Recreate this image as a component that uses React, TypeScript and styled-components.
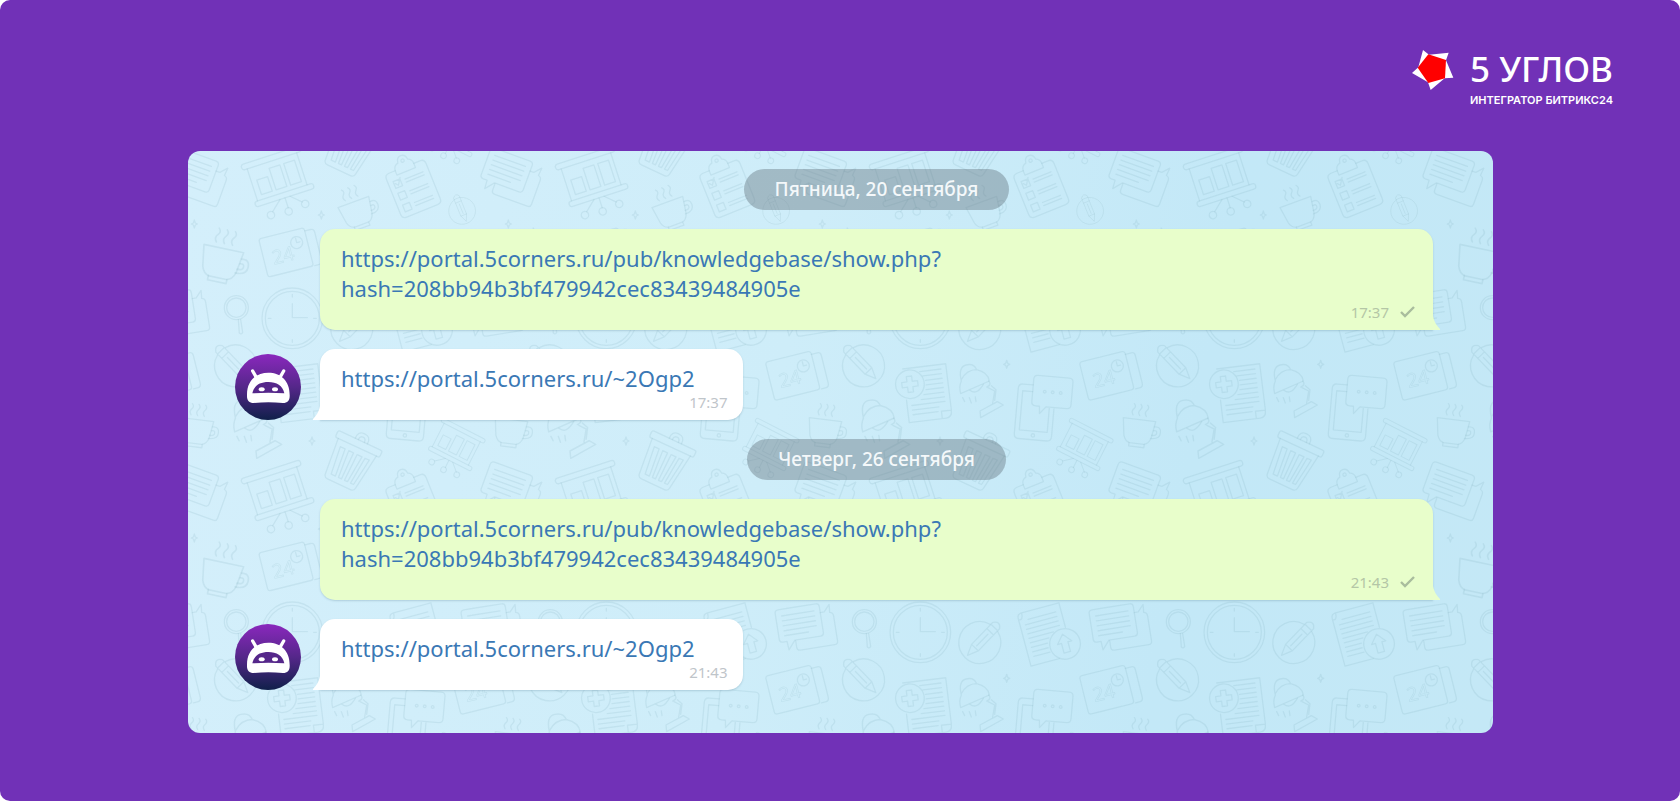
import React from "react";
import styled, { createGlobalStyle, css } from "styled-components";

const GlobalStyle = createGlobalStyle`
  body {
    margin: 0;
    background: #ffffff;
    font-family: "Noto Sans", "Open Sans", sans-serif;
  }
`;

const Stage = styled.div`
  box-sizing: border-box;
  min-height: 100vh;
  padding-bottom: 68px;
  border-radius: 10px;
  background: #7131b7;
`;

const Header = styled.header`
  display: flex;
  justify-content: flex-end;
  box-sizing: border-box;
  min-height: 151px;
  padding: 50px 67px 0 0;
`;

const Logo = styled.a`
  display: flex;
  align-items: flex-start;
  gap: 16px;
  color: #ffffff;
  text-decoration: none;
`;

const LogoMark = styled.svg`
  width: 42px;
  height: 40px;
`;

const LogoText = styled.span`
  display: flex;
  flex-direction: column;
`;

const LogoName = styled.span`
  font-size: 35px;
  line-height: 38px;
  font-weight: 500;
`;

const LogoTagline = styled.span`
  font-family: Inter, sans-serif;
  font-size: 11px;
  line-height: 24px;
  font-weight: 600;
`;

const Chat = styled.main`
  position: relative;
  margin: 0 187px 0 188px;
  overflow: hidden;
  border-radius: 12px;
  background: linear-gradient(100deg, #d4effb 0%, #ceedf9 45%, #c3e8f7 75%, #c4e8f6 100%);
`;

const Wallpaper = styled.svg`
  position: absolute;
  inset: 0;
  width: 100%;
  height: 100%;
`;

const Messages = styled.div`
  position: relative;
  display: flex;
  flex-direction: column;
  gap: 19px;
  padding: 18px 60px 43px 47px;
`;

const DatePill = styled.time`
  align-self: center;
  margin-left: 85px;
  padding: 0 31px;
  border-radius: 21px;
  background: rgba(96, 110, 120, 0.4);
  color: #f4f8fa;
  font-size: 19px;
  font-weight: 500;
  line-height: 41px;
`;

const Row = styled.article`
  display: grid;
  grid-template-columns: 66px minmax(0, 1fr);
  column-gap: 19px;
  align-items: end;
`;

const Avatar = styled.svg`
  width: 66px;
  height: 66px;
`;

const Bubble = styled.div<{ $own?: boolean }>`
  position: relative;
  grid-column: 2;
  display: flex;
  flex-direction: column;
  align-items: flex-start;
  padding: 14px 15px 9px 21px;
  box-shadow: 0 1px 2px rgba(90, 130, 150, 0.3);

  &::after {
    content: "";
    position: absolute;
    bottom: 0;
    width: 7px;
    height: 14px;
    background: inherit;
  }

  ${({ $own }) =>
    $own
      ? css`
          padding-right: 18px;
          border-radius: 15px 15px 0 15px;
          background: #e8fecb;
          &::after {
            left: 100%;
            clip-path: path("M0 0 Q1 7 7 13 V14 H0 Z");
          }
        `
      : css`
          justify-self: start;
          border-radius: 15px 15px 15px 0;
          background: #ffffff;
          &::after {
            right: 100%;
            clip-path: path("M7 0 Q6 7 0 13 V14 H7 Z");
          }
        `}
`;

const MessageLink = styled.a`
  margin-right: 33px;
  color: #3a78b5;
  font-size: 22px;
  line-height: 30px;
  text-decoration: none;
  overflow-wrap: anywhere;
`;

const Meta = styled.div<{ $own?: boolean }>`
  align-self: flex-end;
  display: flex;
  align-items: center;
  gap: 11px;
  color: ${({ $own }) => ($own ? "#b4c6a6" : "#bfc5ca")};
  font-size: 15px;
  line-height: 18px;
`;

const Check = styled.svg`
  width: 15px;
  height: 12px;
`;

/* Wallpaper tile is drawn on a 942 x 942 grid, three units to a pixel. */
const TILE = 942;

const Star = ({ x, y }: { x: number; y: number }) => (
  <path d={`M${x} ${y - 12}L${x + 3} ${y - 3}L${x + 9} ${y}L${x + 3} ${y + 3}L${x} ${y + 12}L${x - 3} ${y + 3}L${x - 9} ${y}L${x - 3} ${y - 3}Z`} />
);

const Board = ({ transform }: { transform: string }) => (
  <g transform={transform}>
    <rect x="0" y="0" width="186" height="17" rx="8" />
    <path d="M15 17V118M171 17V118" />
    <rect x="5" y="118" width="184" height="17" rx="8" />
    <rect x="32" y="58" width="34" height="46" />
    <rect x="78" y="36" width="34" height="68" />
    <rect x="124" y="36" width="34" height="68" />
    <path d="M80 135L48 163M96 135V166M112 135L142 163" />
    <circle cx="40" cy="171" r="11" />
    <circle cx="94" cy="177" r="11" />
    <circle cx="148" cy="171" r="11" />
  </g>
);

const Cup = ({ transform }: { transform: string }) => (
  <g transform={transform}>
    <path d="M0 0H98L90 52Q84 70 70 72H28Q14 70 8 52Z" />
    <path d="M26 72V82H72V72" />
    <path d="M96 16Q116 12 116 32T88 52M95 28Q105 25 105 34T91 42" />
    <path d="M28 -12Q20 -22 28 -30T28 -46M48 -12Q40 -22 48 -30T48 -46M68 -12Q60 -22 68 -30T68 -46" />
  </g>
);

const Calendar = ({ transform }: { transform: string }) => (
  <g transform={transform}>
    <rect x="0" y="0" width="140" height="118" rx="8" />
    <path d="M140 10H158Q168 10 168 20V106Q168 118 156 118H144" />
    <text x="26" y="86" fontSize="58" fontFamily="Noto Sans, sans-serif" strokeWidth="2">24</text>
    <circle cx="108" cy="38" r="18" />
    <path d="M108 25V38H118" />
  </g>
);

const PencilBadge = ({ transform, r = 63 }: { transform: string; r?: number }) => (
  <g transform={transform}>
    <path d={`M16 ${-r + 3}A${r} ${r} 0 1 1 -16 ${-r + 3}`} />
    <path d="M-14 -70Q0 -90 14 -70V22L0 54L-14 22ZM-14 22H14M-14 -62H14M-14 -44H14M0 -34V14" />
  </g>
);

const Lamp = ({ transform }: { transform: string }) => (
  <g transform={transform}>
    <path d="M4 50Q-6 8 18 2T50 16Q84 24 88 50L2 88Q-4 68 4 50ZM4 46Q20 16 50 16" />
    <path d="M30 78Q50 94 70 60M8 100L14 112M28 100L34 116M46 98L48 112" />
    <path d="M86 50Q96 62 80 68M84 70L104 80L98 116M94 64L108 76L104 108" />
    <path d="M60 140L112 112L130 122L62 160Z" />
  </g>
);

const Trash = () => (
  <g transform="translate(541 838) rotate(25)">
    <rect x="0" y="0" width="146" height="22" rx="6" />
    <path d="M56 0Q54 -24 76 -24T96 0M66 0Q66 -13 76 -13T86 0" />
    <path d="M10 22L20 136Q22 146 32 146H108Q118 146 120 136L136 22" />
    <path d="M26 42H42L50 128H36ZM54 42H70V128H60ZM82 42H98L90 128H80ZM108 42H122L110 128H100Z" />
  </g>
);

const Clipboard = () => (
  <g transform="translate(680 72) rotate(-22)">
    <path d="M34 0H14Q0 0 0 14V128Q0 142 14 142H114Q128 142 128 128V14Q128 0 114 0H94V14H34Z" />
    <path d="M34 0Q36 -16 50 -18Q52 -36 66 -36T82 -18Q94 -14 94 0" />
    <circle cx="66" cy="-20" r="5" />
    <path d="M16 28H38V50H16ZM16 66H38V88H16ZM16 104H38V126H16ZM20 36L27 44L40 24" />
    <path d="M52 34H110M52 44H110M52 72H110M52 82H110M52 110H110M52 120H110" />
  </g>
);

const Bubbles = ({ transform }: { transform: string }) => (
  <g transform={transform}>
    <path d="M10 0H124Q134 0 134 10V88Q134 98 124 98H46L24 124L22 98H10Q0 98 0 88V10Q0 0 10 0Z" />
    <path d="M18 20H116M18 35H116M18 50H116M18 65H116M18 80H90" />
    <path d="M134 28H146L164 8L162 32Q172 34 172 44V120Q172 130 162 130H58Q48 130 48 120V100" />
  </g>
);

const UploadSheet = () => (
  <g transform="translate(693 447) rotate(-15)">
    <path d="M130 76V0H14Q0 0 0 14V162H88M0 18Q14 24 14 0" />
    <path d="M28 24H114M16 38H114M16 52H114M16 66H114M16 80H92M16 94H74M16 108H66M16 122H64M16 136H66" />
    <circle cx="116" cy="124" r="46" />
    <path d="M116 94L138 120H126V150H106V120H94Z" />
  </g>
);

const AddSheet = () => (
  <g transform="translate(350 654) rotate(-7)">
    <path d="M0 0H130V140Q130 162 112 162H0V94M100 162V140H130" />
    <path d="M50 14H114M58 28H114M64 42H114M64 56H114M62 70H114M54 84H114M44 98H114M14 112H114M14 126H94M14 140H90" />
    <circle cx="16" cy="48" r="43" />
    <path d="M8 24H24V40H40V56H24V72H8V56H-8V40H8Z" />
  </g>
);

const PhoneChat = () => (
  <g transform="translate(698 698) rotate(5)">
    <path d="M44 0H14Q0 0 0 14V150Q0 164 14 164H98Q112 164 112 150V66M44 20H14V138H98V66" />
    <circle cx="56" cy="151" r="5" />
    <path d="M56 -30H150Q162 -30 162 -18V50Q162 62 150 62H88L70 84L68 62H56Q44 62 44 50V-18Q44 -30 56 -30Z" />
    <circle cx="80" cy="17" r="4" />
    <circle cx="104" cy="17" r="4" />
    <circle cx="128" cy="17" r="4" />
  </g>
);

const TileArt = () => (
  <>
    <Bubbles transform="translate(58 -12) rotate(20)" />
    <Board transform="translate(248 42) rotate(-18)" />
    <Trash />
    <Cup transform="translate(540 170) rotate(-20)" />
    <Clipboard />
    <PencilBadge transform="translate(912 179) rotate(-22) scale(.64)" />
    <Star x={490} y={192} />
    <Star x={109} y={219} />
    <Star x={462} y={870} />
    <Star x={662} y={640} />
    <Cup transform="translate(138 280) rotate(12) scale(1.24)" />
    <Calendar transform="translate(302 264) rotate(-14)" />
    <Bubbles transform="translate(908 436) rotate(-9)" />
    <g>
      <circle cx="235" cy="470" r="36" />
      <circle cx="235" cy="470" r="29" />
      <path d="M241 506L244 546Q250 552 254 544L248 506" />
    </g>
    <g>
      <circle cx="403" cy="502" r="91" />
      <circle cx="403" cy="502" r="81" />
      <path d="M403 458V500H448" />
      <path d="M403 430V438M403 566V574M331 502H339M467 502H475" />
    </g>
    <PencilBadge transform="translate(582 532) rotate(44)" />
    <UploadSheet />
    <PencilBadge transform="translate(232 644) rotate(-44)" />
    <AddSheet />
    <Lamp transform="translate(522 640)" />
    <Lamp transform="translate(228 746) scale(1.1)" />
    <PhoneChat />
    <Calendar transform="translate(880 634) rotate(-14)" />
    <Cup transform="translate(70 800) rotate(7)" />
    <Board transform="translate(854 800) rotate(27) scale(.78)" />
  </>
);

const ChatWallpaper = () => (
  <Wallpaper aria-hidden="true">
    <defs>
      <g id="tile-art" fill="none" stroke="#6d9fa8" strokeOpacity="0.14" strokeWidth="4" strokeLinecap="round" strokeLinejoin="round">
        <TileArt />
      </g>
      <pattern id="tile" x="-30" y="0" width="314" height="314" patternUnits="userSpaceOnUse" viewBox={`0 0 ${TILE} ${TILE}`}>
        <use href="#tile-art" />
        <use href="#tile-art" x={-TILE} />
        <use href="#tile-art" y={-TILE} />
        <use href="#tile-art" y={TILE} />
        <use href="#tile-art" x={-TILE} y={-TILE} />
      </pattern>
    </defs>
    <rect width="100%" height="100%" fill="url(#tile)" />
  </Wallpaper>
);

const BotAvatar = ({ id }: { id: string }) => (
  <Avatar viewBox="45 40 198 198" role="img" aria-label="Бот">
    <defs>
      <linearGradient id={id} x1="0" y1="0" x2="0" y2="1">
        <stop offset="0" stopColor="#8a28bd" />
        <stop offset="0.5" stopColor="#55278a" />
        <stop offset="1" stopColor="#10204a" />
      </linearGradient>
    </defs>
    <circle cx="144" cy="139" r="99" fill={`url(#${id})`} />
    <path d="M98 91L109 110M191 91L180 110" stroke="#fff" strokeWidth="10" strokeLinecap="round" />
    <path d="M81 162C81 120 108 96 145 96S209 120 209 162C210 180 203 187 189 187Q145 183 101 187C87 187 80 180 81 162Z" fill="#fff" />
    <path d="M97 158C102 134 120 124 145 124S188 134 193 158Q145 155 97 158Z" fill="#55278a" />
    <ellipse cx="125" cy="146" rx="9" ry="6" fill="#fff" />
    <ellipse cx="165" cy="146" rx="9" ry="6" fill="#fff" />
  </Avatar>
);

type Exchange = { date: string; iso: string; time: string };

const exchanges: Exchange[] = [
  { date: "Пятница, 20 сентября", iso: "2019-09-20", time: "17:37" },
  { date: "Четверг, 26 сентября", iso: "2019-09-26", time: "21:43" },
];

const LONG_URL = ["https://portal.5corners.ru/pub/knowledgebase/show.php?", "hash=208bb94b3bf479942cec83439484905e"];
const SHORT_URL = "https://portal.5corners.ru/~2Ogp2";

export default function App() {
  return (
    <Stage>
      <GlobalStyle />
      <Header>
        <Logo href="#">
          <LogoMark viewBox="60 61 124 120" aria-hidden="true">
            <path d="M92 61L110 75L169 69L161 92L183 144L157 146L115 181L107 158L59 130L78 113Z" fill="#fff" />
            <path d="M108 74L161 91L158 146L108 160L76 114Z" fill="#f00" />
          </LogoMark>
          <LogoText>
            <LogoName>5 УГЛОВ</LogoName>
            <LogoTagline>ИНТЕГРАТОР БИТРИКС24</LogoTagline>
          </LogoText>
        </Logo>
      </Header>
      <Chat>
        <ChatWallpaper />
        <Messages>
          {exchanges.map(({ date, iso, time }) => (
            <React.Fragment key={iso}>
              <DatePill dateTime={iso}>{date}</DatePill>
              <Row>
                <Bubble $own>
                  <MessageLink href={LONG_URL.join("")}>
                    {LONG_URL[0]}
                    <br />
                    {LONG_URL[1]}
                  </MessageLink>
                  <Meta $own>
                    <time>{time}</time>
                    <Check viewBox="0 0 15 12" aria-hidden="true">
                      <path d="M1 6L5 10L14 1" fill="none" stroke="#a9bd9d" strokeWidth="2.4" />
                    </Check>
                  </Meta>
                </Bubble>
              </Row>
              <Row>
                <BotAvatar id={`bot-${iso}`} />
                <Bubble>
                  <MessageLink href={SHORT_URL}>{SHORT_URL}</MessageLink>
                  <Meta>
                    <time>{time}</time>
                  </Meta>
                </Bubble>
              </Row>
            </React.Fragment>
          ))}
        </Messages>
      </Chat>
    </Stage>
  );
}
